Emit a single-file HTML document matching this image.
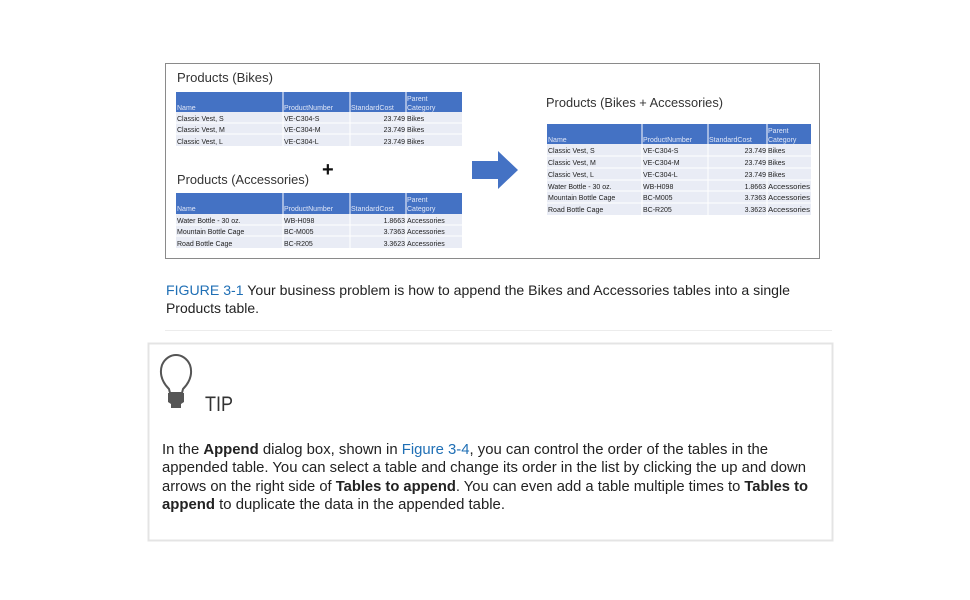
<!DOCTYPE html>
<html><head><meta charset="utf-8"><style>
html,body{margin:0;padding:0;background:#fff;width:970px;height:600px;overflow:hidden}
svg{display:block}
text{font-family:"Liberation Sans",sans-serif}
</style></head><body>
<svg width="970" height="600" viewBox="0 0 970 600" xmlns="http://www.w3.org/2000/svg">
<!-- figure box -->
<rect x="165.5" y="63.5" width="654" height="195" fill="#fff" stroke="#8a8a8a" stroke-width="1"/>
<g font-size="13" fill="#333">
<text x="177" y="82" textLength="96" lengthAdjust="spacingAndGlyphs">Products (Bikes)</text>
<text x="177" y="184" textLength="132" lengthAdjust="spacingAndGlyphs">Products (Accessories)</text>
<text x="546" y="107" textLength="177" lengthAdjust="spacingAndGlyphs">Products (Bikes + Accessories)</text>
</g>
<text x="322" y="176" font-size="20" fill="#111" font-weight="bold">+</text>
<!-- arrow -->
<polygon points="472,161 498,161 498,151 518,170 498,189 498,179 472,179" fill="#4472c4"/>
<!-- table 1 -->
<g font-size="7" fill="#222">
<rect x="176" y="92" width="286" height="20" fill="#4472c4"/>
<rect x="176" y="112" width="286" height="34" fill="#e9ecf5"/>
<line x1="176" y1="123" x2="462" y2="123" stroke="#fff"/><line x1="176" y1="134" x2="462" y2="134" stroke="#fff"/>
<g stroke="#fff"><line x1="283" y1="92" x2="283" y2="146"/><line x1="350" y1="92" x2="350" y2="146"/><line x1="406" y1="92" x2="406" y2="146"/></g>
<g fill="#dfe6f7"><text x="177" y="110">Name</text><text x="284" y="110">ProductNumber</text><text x="351" y="110">StandardCost</text><text x="407" y="101">Parent</text><text x="407" y="110">Category</text></g>
<text x="177" y="121">Classic Vest, S</text><text x="284" y="121">VE-C304-S</text><text x="405" y="121" text-anchor="end">23.749</text><text x="407" y="121">Bikes</text>
<text x="177" y="132">Classic Vest, M</text><text x="284" y="132">VE-C304-M</text><text x="405" y="132" text-anchor="end">23.749</text><text x="407" y="132">Bikes</text>
<text x="177" y="144">Classic Vest, L</text><text x="284" y="144">VE-C304-L</text><text x="405" y="144" text-anchor="end">23.749</text><text x="407" y="144">Bikes</text>
</g>
<!-- table 2 -->
<g font-size="7" fill="#222">
<rect x="176" y="193" width="286" height="21" fill="#4472c4"/>
<rect x="176" y="214" width="286" height="34" fill="#e9ecf5"/>
<line x1="176" y1="225" x2="462" y2="225" stroke="#fff"/><line x1="176" y1="236" x2="462" y2="236" stroke="#fff"/>
<g stroke="#fff"><line x1="283" y1="193" x2="283" y2="248"/><line x1="350" y1="193" x2="350" y2="248"/><line x1="406" y1="193" x2="406" y2="248"/></g>
<g fill="#dfe6f7"><text x="177" y="211">Name</text><text x="284" y="211">ProductNumber</text><text x="351" y="211">StandardCost</text><text x="407" y="202">Parent</text><text x="407" y="211">Category</text></g>
<text x="177" y="223">Water Bottle - 30 oz.</text><text x="284" y="223">WB-H098</text><text x="405" y="223" text-anchor="end">1.8663</text><text x="407" y="223">Accessories</text>
<text x="177" y="234">Mountain Bottle Cage</text><text x="284" y="234">BC-M005</text><text x="405" y="234" text-anchor="end">3.7363</text><text x="407" y="234">Accessories</text>
<text x="177" y="246">Road Bottle Cage</text><text x="284" y="246">BC-R205</text><text x="405" y="246" text-anchor="end">3.3623</text><text x="407" y="246">Accessories</text>
</g>
<!-- table 3 -->
<g font-size="7" fill="#222">
<rect x="547" y="124" width="264" height="20" fill="#4472c4"/>
<rect x="547" y="144" width="264" height="71" fill="#e9ecf5"/>
<g stroke="#fff"><line x1="547" y1="156" x2="811" y2="156"/><line x1="547" y1="168" x2="811" y2="168"/><line x1="547" y1="180" x2="811" y2="180"/><line x1="547" y1="191" x2="811" y2="191"/><line x1="547" y1="203" x2="811" y2="203"/>
<line x1="642" y1="124" x2="642" y2="215"/><line x1="708" y1="124" x2="708" y2="215"/><line x1="767" y1="124" x2="767" y2="215"/></g>
<g fill="#dfe6f7"><text x="548" y="142">Name</text><text x="643" y="142">ProductNumber</text><text x="709" y="142">StandardCost</text><text x="768" y="133">Parent</text><text x="768" y="142">Category</text></g>
<text x="548" y="153">Classic Vest, S</text><text x="643" y="153">VE-C304-S</text><text x="766" y="153" text-anchor="end">23.749</text><text x="768" y="153">Bikes</text>
<text x="548" y="165">Classic Vest, M</text><text x="643" y="165">VE-C304-M</text><text x="766" y="165" text-anchor="end">23.749</text><text x="768" y="165">Bikes</text>
<text x="548" y="177">Classic Vest, L</text><text x="643" y="177">VE-C304-L</text><text x="766" y="177" text-anchor="end">23.749</text><text x="768" y="177">Bikes</text>
<text x="548" y="189">Water Bottle - 30 oz.</text><text x="643" y="189">WB-H098</text><text x="766" y="189" text-anchor="end">1.8663</text><text x="768" y="189" textLength="42" lengthAdjust="spacingAndGlyphs">Accessories</text>
<text x="548" y="200">Mountain Bottle Cage</text><text x="643" y="200">BC-M005</text><text x="766" y="200" text-anchor="end">3.7363</text><text x="768" y="200" textLength="42" lengthAdjust="spacingAndGlyphs">Accessories</text>
<text x="548" y="212">Road Bottle Cage</text><text x="643" y="212">BC-R205</text><text x="766" y="212" text-anchor="end">3.3623</text><text x="768" y="212" textLength="42" lengthAdjust="spacingAndGlyphs">Accessories</text>
</g>
<!-- caption -->
<g font-size="14" fill="#222">
<text x="166" y="295" textLength="624" lengthAdjust="spacingAndGlyphs"><tspan fill="#1f6fb5">FIGURE 3-1</tspan>   Your business problem is how to append the Bikes and Accessories tables into a single</text>
<text x="166" y="313" textLength="93" lengthAdjust="spacingAndGlyphs">Products table.</text>
</g>
<line x1="165" y1="330.5" x2="832" y2="330.5" stroke="#ececec" stroke-width="1"/>
<!-- tip box -->
<rect x="148.5" y="343.5" width="684" height="197" fill="#fff" stroke="#e4e4e4" stroke-width="2"/>
<!-- bulb -->
<path d="M169,389 C160,380 160,371 162,365 C165,358 171,355 176,355 C181,355 187,358 190,365 C192,371 192,380 183,389 L182,393 L170,393 Z" fill="none" stroke="#555" stroke-width="2"/>
<path d="M168,393 L184,393 L184,402 L181,404 L181,408 L171,408 L171,404 L168,402 Z" fill="#555"/>
<text x="205" y="411" font-size="21" fill="#333" textLength="28" lengthAdjust="spacingAndGlyphs">TIP</text>
<g font-size="14.5" fill="#222">
<text x="162" y="454" textLength="606" lengthAdjust="spacingAndGlyphs">In the <tspan font-weight="bold">Append</tspan> dialog box, shown in <tspan fill="#1f6fb5">Figure 3-4</tspan>, you can control the order of the tables in the</text>
<text x="162" y="472" textLength="644" lengthAdjust="spacingAndGlyphs">appended table. You can select a table and change its order in the list by clicking the up and down</text>
<text x="162" y="491" textLength="646" lengthAdjust="spacingAndGlyphs">arrows on the right side of <tspan font-weight="bold">Tables to append</tspan>. You can even add a table multiple times to <tspan font-weight="bold">Tables to</tspan></text>
<text x="162" y="509" textLength="343" lengthAdjust="spacingAndGlyphs"><tspan font-weight="bold">append</tspan> to duplicate the data in the appended table.</text>
</g>
</svg>
</body></html>
